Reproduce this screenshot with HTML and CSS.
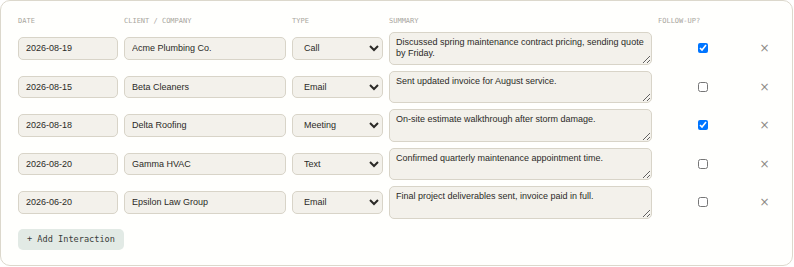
FILE: index.html
```html
<!DOCTYPE html>
<html lang="en">
<head>
  <meta charset="UTF-8">
  <title>Interactions</title>
  <link rel="stylesheet" href="styles.css">
</head>
<body>
  <div class="card">
    <div class="grid head">
      <span>Date</span>
      <span>Client / Company</span>
      <span>Type</span>
      <span>Summary</span>
      <span>Follow-up?</span>
      <span></span>
    </div>

    <div class="rows">
      <div class="grid row">
        <input type="text" value="2026-08-19">
        <input type="text" value="Acme Plumbing Co.">
        <select><option selected>Call</option><option>Email</option><option>Meeting</option><option>Text</option></select>
        <textarea>Discussed spring maintenance contract pricing, sending quote by Friday.</textarea>
        <div class="check"><input type="checkbox" checked></div>
        <button class="remove">&times;</button>
      </div>

      <div class="grid row">
        <input type="text" value="2026-08-15">
        <input type="text" value="Beta Cleaners">
        <select><option>Call</option><option selected>Email</option><option>Meeting</option><option>Text</option></select>
        <textarea>Sent updated invoice for August service.</textarea>
        <div class="check"><input type="checkbox"></div>
        <button class="remove">&times;</button>
      </div>

      <div class="grid row">
        <input type="text" value="2026-08-18">
        <input type="text" value="Delta Roofing">
        <select><option>Call</option><option>Email</option><option selected>Meeting</option><option>Text</option></select>
        <textarea>On-site estimate walkthrough after storm damage.</textarea>
        <div class="check"><input type="checkbox" checked></div>
        <button class="remove">&times;</button>
      </div>

      <div class="grid row">
        <input type="text" value="2026-08-20">
        <input type="text" value="Gamma HVAC">
        <select><option>Call</option><option>Email</option><option>Meeting</option><option selected>Text</option></select>
        <textarea>Confirmed quarterly maintenance appointment time.</textarea>
        <div class="check"><input type="checkbox"></div>
        <button class="remove">&times;</button>
      </div>

      <div class="grid row">
        <input type="text" value="2026-06-20">
        <input type="text" value="Epsilon Law Group">
        <select><option>Call</option><option selected>Email</option><option>Meeting</option><option>Text</option></select>
        <textarea>Final project deliverables sent, invoice paid in full.</textarea>
        <div class="check"><input type="checkbox"></div>
        <button class="remove">&times;</button>
      </div>
    </div>

    <button class="add">+ Add Interaction</button>
  </div>
</body>
</html>
```

FILE: styles.css
```css
body {
  margin: 0;
  background: #fff;
  font-family: 'Liberation Sans', Arial, sans-serif;
  color: #2b2a27;
}

.card {
  margin-right: 1px;
  padding: 15px 17px 15px 17px;
  border: 1px solid #dcd8cc;
  border-radius: 10px;
  background: #fffffd;
}

.grid {
  display: grid;
  grid-template-columns: 100px 162px 91px 263px 90px 21px;
  column-gap: 6px;
  align-items: center;
}

.head {
  font-family: 'DejaVu Sans Mono', monospace;
  font-size: 7px;
  line-height: 10px;
  text-transform: uppercase;
  color: #a9a69e;
  margin-bottom: 6px;
}

.rows {
  display: flex;
  flex-direction: column;
  gap: 6px;
}

input[type="text"],
select,
textarea {
  box-sizing: border-box;
  width: 100%;
  margin: 0;
  font-family: 'Liberation Sans', Arial, sans-serif;
  font-size: 9px;
  color: #2b2a27;
  background: #f3f1eb;
  border: 1px solid #d8d4c8;
  border-radius: 5px;
}

input[type="text"] {
  height: 22.5px;
  padding: 0 7px;
}

select {
  height: 22.5px;
  padding: 0 4px 0 7px;
}

textarea {
  height: 32.5px;
  padding: 4px 6px;
  line-height: 11px;
  resize: vertical;
}

.check {
  display: flex;
  justify-content: center;
}

.check input {
  width: 10px;
  height: 10px;
  margin: 0;
}

.remove {
  background: none;
  border: none;
  padding: 0;
  font-family: 'DejaVu Sans', sans-serif;
  font-size: 12px;
  color: #8d8b86;
  cursor: pointer;
}

.add {
  margin-top: 10px;
  height: 21px;
  padding: 0 9px;
  font-family: 'DejaVu Sans Mono', monospace;
  font-size: 8.6px;
  color: #3a3d3a;
  background: #e2eae5;
  border: none;
  border-radius: 5px;
  cursor: pointer;
}
```
